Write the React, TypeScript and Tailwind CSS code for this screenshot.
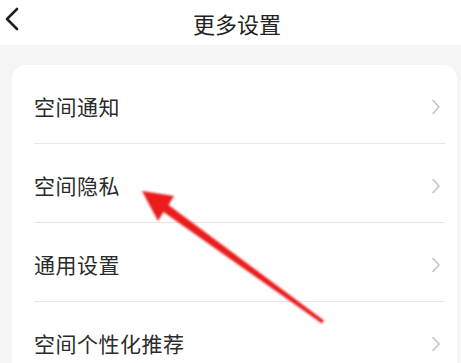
const items = ['空间通知', '空间隐私', '通用设置', '空间个性化推荐'];

function ChevronRight() {
  return (
    <svg width="10" height="16" viewBox="0 0 10 16" fill="none">
      <path d="M2 1.5 8 8l-6 6.5" stroke="#c4c4c4" strokeWidth={1.6} strokeLinecap="round" strokeLinejoin="round" />
    </svg>
  );
}

export default function App() {
  return (
    <div
      className="relative w-[461px] h-[363px] overflow-hidden bg-[#f5f5f5]"
      style={{ fontFamily: '"Noto Sans CJK SC", "Noto Sans", sans-serif' }}
    >
      {/* 顶栏 */}
      <div className="relative flex h-[45px] items-center justify-center bg-white pl-[13px]">
        <svg className="absolute left-[3px] top-[7px]" width="18" height="24" viewBox="0 0 18 24" fill="none">
          <path d="M14 2 4 12l10 10" stroke="#1f1f1f" strokeWidth={2.6} strokeLinecap="round" strokeLinejoin="round" />
        </svg>
        <h1 className="text-[22px] leading-none text-[#222]">更多设置</h1>
      </div>

      {/* 列表卡片 */}
      <div className="ml-[12px] mr-[4px] mt-[20px] rounded-[14px] bg-white pl-[22px] pr-[12px]">
        {items.map((label, i) => (
          <div
            key={label}
            className={`flex h-[79px] items-center justify-between pt-[5px] ${
              i < items.length - 1 ? 'border-b border-[#e6e6e6]' : ''
            }`}
          >
            <span className="text-[21px] tracking-[0.5px] text-[#2a2a2a]">{label}</span>
            <span className="pr-[4px]">
              <ChevronRight />
            </span>
          </div>
        ))}
      </div>

      {/* 红色箭头 */}
      <svg className="absolute left-0 top-0" width="461" height="363" viewBox="0 0 461 363">
        <defs>
          <filter id="blur" x="-10%" y="-10%" width="120%" height="120%">
            <feGaussianBlur stdDeviation="0.8" />
          </filter>
        </defs>
        <polygon
          points="142,191 174,196 168.5,205 324,320.5 322,323.5 163.5,212 158,221"
          fill="#ea1c1c"
          filter="url(#blur)"
        />
      </svg>
    </div>
  );
}
